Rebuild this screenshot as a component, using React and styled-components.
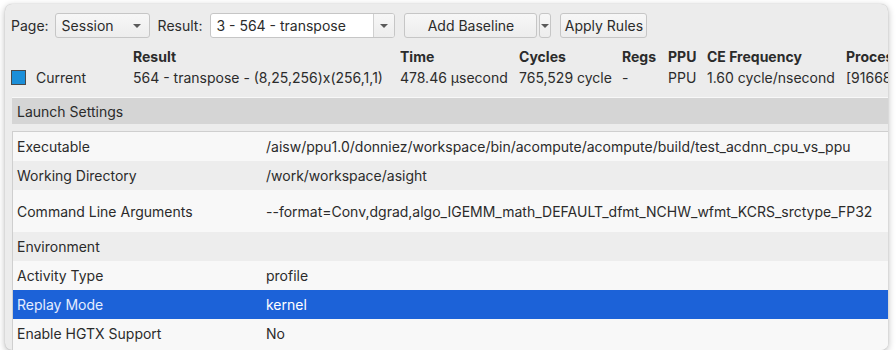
import React from "react";
import styled, { createGlobalStyle } from "styled-components";

const GlobalStyle = createGlobalStyle`
  html, body {
    margin: 0;
    padding: 0;
    background: #ffffff;
  }
  body {
    font-family: "Inter", "Noto Sans", sans-serif;
    font-size: 14px;
    color: #2b2b2b;
  }
`;

const Window = styled.div`
  box-sizing: border-box;
  width: 883px;
  height: 346px;
  margin: 4px 0 0 5px;
  padding-left: 6px;
  background: #ececec;
  border-radius: 7px;
  box-shadow: 0 2px 7px rgba(0, 0, 0, 0.28), 0 0 1px rgba(0, 0, 0, 0.25);
  overflow: hidden;
  display: flex;
  flex-direction: column;
`;

const Toolbar = styled.div`
  display: flex;
  align-items: center;
  height: 25px;
  margin-top: 9px;
  white-space: nowrap;
`;

const Label = styled.span`
  margin-left: ${(p) => p.$ml || 0}px;
  margin-right: ${(p) => p.$mr || 0}px;
`;

const Select = styled.div`
  box-sizing: border-box;
  width: ${(p) => p.$w}px;
  height: 25px;
  display: flex;
  align-items: center;
  justify-content: space-between;
  padding: 0 8px 0 6px;
  background: linear-gradient(#f7f7f7, #ededed);
  border: 1px solid #c6c6c6;
  border-radius: 3px;
`;

const Combo = styled.div`
  box-sizing: border-box;
  width: ${(p) => p.$w}px;
  height: 25px;
  display: flex;
  background: #ffffff;
  border: 1px solid #c6c6c6;
  border-radius: 3px;
  overflow: hidden;
`;

const ComboText = styled.div`
  flex: 1;
  display: flex;
  align-items: center;
  padding-left: 5px;
`;

const ComboButton = styled.div`
  width: 20px;
  display: flex;
  align-items: center;
  justify-content: center;
  background: linear-gradient(#f7f7f7, #ededed);
  border-left: 1px solid #d0d0d0;
`;

const Button = styled.div`
  box-sizing: border-box;
  width: ${(p) => p.$w}px;
  height: 25px;
  margin-left: ${(p) => p.$ml || 0}px;
  display: flex;
  align-items: center;
  justify-content: center;
  background: linear-gradient(#f7f7f7, #ededed);
  border: 1px solid #c6c6c6;
  border-radius: 3px;
`;

const Arrow = styled.span`
  width: 0;
  height: 0;
  border-left: 4px solid transparent;
  border-right: 4px solid transparent;
  border-top: 4px solid #5a5a5a;
`;

const Summary = styled.div`
  display: grid;
  grid-template-columns: 122px 267px 119px 103px 46px 39px 139px 1fr;
  grid-auto-rows: 21px;
  margin-top: 8px;
  white-space: nowrap;
  align-items: center;
`;

const HeadCell = styled.div`
  font-weight: 700;
  overflow: hidden;
`;

const Cell = styled.div`
  overflow: hidden;
  display: flex;
  align-items: center;
`;

const Swatch = styled.span`
  box-sizing: border-box;
  width: 15px;
  height: 15px;
  background: #1b8fd9;
  border: 1px solid #4a4a4a;
  margin-right: 10px;
`;

const Divider = styled.div`
  height: 1px;
  background: #f8f8f8;
  margin-top: 9px;
  margin-left: 1px;
`;

const Section = styled.div`
  margin-left: 1px;
  height: 26px;
  display: flex;
  align-items: center;
  padding-left: 5px;
  background: #d5d5d5;
`;

const Table = styled.div`
  margin-top: 7px;
  margin-left: 1px;
  flex: 1;
  border-top: 1px solid #cfcfcf;
  border-left: 1px solid #cfcfcf;
  background: #f8f8f8;
`;

const Row = styled.div`
  display: grid;
  grid-template-columns: 253px 1fr;
  height: ${(p) => p.$h || 29}px;
  align-items: center;
  white-space: nowrap;
  overflow: hidden;
  background: ${(p) => (p.$sel ? "#1c62d8" : p.$alt ? "#ededed" : "#f8f8f8")};
  color: ${(p) => (p.$sel ? "#ffffff" : "#2b2b2b")};
`;

const Key = styled.div`
  padding-left: 4px;
  color: ${(p) => (p.$sel ? "#e4edff" : "inherit")};
`;

const Val = styled.div`
  overflow: hidden;
`;

const rows = [
  ["Executable", "/aisw/ppu1.0/donniez/workspace/bin/acompute/acompute/build/test_acdnn_cpu_vs_ppu"],
  ["Working Directory", "/work/workspace/asight"],
  ["Command Line Arguments", "--format=Conv,dgrad,algo_IGEMM_math_DEFAULT_dfmt_NCHW_wfmt_KCRS_srctype_FP32", 42],
  ["Environment", ""],
  ["Activity Type", "profile"],
  ["Replay Mode", "kernel"],
  ["Enable HGTX Support", "No"],
];

export default function App() {
  return (
    <>
      <GlobalStyle />
      <Window>
        <Toolbar>
          <Label $mr={6}>Page:</Label>
          <Select $w={95}>
            <span>Session</span>
            <Arrow />
          </Select>
          <Label $ml={8} $mr={8}>Result:</Label>
          <Combo $w={185}>
            <ComboText>3 - 564 - transpose</ComboText>
            <ComboButton>
              <Arrow />
            </ComboButton>
          </Combo>
          <Button $w={133} $ml={9}>Add Baseline</Button>
          <Button $w={12} $ml={2}>
            <Arrow />
          </Button>
          <Button $w={87} $ml={9}>Apply Rules</Button>
        </Toolbar>

        <Summary>
          <div />
          <HeadCell>Result</HeadCell>
          <HeadCell>Time</HeadCell>
          <HeadCell>Cycles</HeadCell>
          <HeadCell>Regs</HeadCell>
          <HeadCell>PPU</HeadCell>
          <HeadCell>CE Frequency</HeadCell>
          <HeadCell>Process</HeadCell>

          <Cell>
            <Swatch />
            Current
          </Cell>
          <Cell>564 - transpose - (8,25,256)x(256,1,1)</Cell>
          <Cell>478.46 µsecond</Cell>
          <Cell>765,529 cycle</Cell>
          <Cell>-</Cell>
          <Cell>PPU</Cell>
          <Cell>1.60 cycle/nsecond</Cell>
          <Cell>[91668]</Cell>
        </Summary>

        <Divider />
        <Section>Launch Settings</Section>

        <Table>
          {rows.map(([k, v, h], i) => {
            const sel = k === "Replay Mode";
            return (
              <Row key={k} $h={h} $alt={i % 2 === 1} $sel={sel}>
                <Key $sel={sel}>{k}</Key>
                <Val>{v}</Val>
              </Row>
            );
          })}
        </Table>
      </Window>
    </>
  );
}
